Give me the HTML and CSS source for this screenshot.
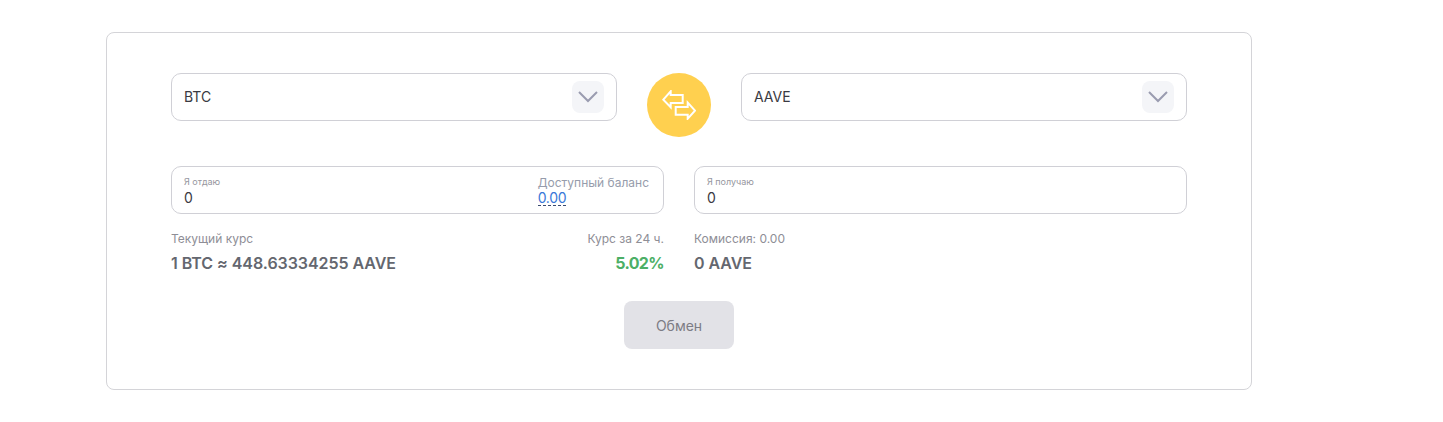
FILE: index.html
```html
<!DOCTYPE html>
<html lang="ru">
<head>
    <meta charset="UTF-8">
    <meta name="viewport" content="width=device-width, initial-scale=1.0">
    <title>Обмен</title>
    <link rel="stylesheet" href="styles.css">
</head>
<body>
    <div class="exchange-card">
        <div class="select-row">
            <div class="select-box">
                <span class="select-text">BTC</span>
                <span class="select-arrow">
                    <svg width="20" height="12" viewBox="0 0 20 12"><path d="M1 1l9 9 9-9" fill="none" stroke="#9a9cb0" stroke-width="2"/></svg>
                </span>
            </div>
            <div class="swap-button">
                <svg width="34" height="30" viewBox="0 0 34 30"><path d="M1.300 9.700L8.700 1.300V5H20.700V13H8.700V17.300Z" fill="none" stroke="#fff" stroke-width="2"/><path d="M13.700 17H25.700V12.700L33 20.700L25.700 28.700V24.700H13.700Z" fill="none" stroke="#fff" stroke-width="2"/></svg>
            </div>
            <div class="select-box">
                <span class="select-text">AAVE</span>
                <span class="select-arrow">
                    <svg width="20" height="12" viewBox="0 0 20 12"><path d="M1 1l9 9 9-9" fill="none" stroke="#9a9cb0" stroke-width="2"/></svg>
                </span>
            </div>
        </div>

        <div class="amount-row">
            <div class="amount-col">
                <div class="amount-box">
                    <div>
                        <div class="amount-label">Я отдаю</div>
                        <div class="amount-value">0</div>
                    </div>
                    <div class="balance">
                        <div class="balance-label">Доступный баланс</div>
                        <span class="balance-value">0.00</span>
                    </div>
                </div>
                <div class="info-row">
                    <div>
                        <div class="info-label">Текущий курс</div>
                        <div class="info-value">1 BTC ≈ 448.63334255 AAVE</div>
                    </div>
                    <div class="info-right">
                        <div class="info-label">Курс за 24 ч.</div>
                        <div class="info-value green">5.02%</div>
                    </div>
                </div>
            </div>
            <div class="amount-col">
                <div class="amount-box">
                    <div>
                        <div class="amount-label">Я получаю</div>
                        <div class="amount-value">0</div>
                    </div>
                </div>
                <div class="info-row">
                    <div>
                        <div class="info-label">Комиссия: 0.00</div>
                        <div class="info-value">0 AAVE</div>
                    </div>
                </div>
            </div>
        </div>

        <div class="submit-row">
            <button type="button" class="submit-button">Обмен</button>
        </div>
    </div>
</body>
</html>
```

FILE: styles.css
```css
body {
    margin: 0;
    background-color: #fff;
    font-family: Inter, "Noto Sans", sans-serif;
    color: #3a3a42;
}

.exchange-card {
    box-sizing: border-box;
    width: 1146px;
    height: 358px;
    margin: 32px 0 0 106px;
    padding: 40px 64px 0;
    border: 1px solid #d4d4d8;
    border-radius: 8px;
}

.select-row {
    display: flex;
    justify-content: space-between;
    height: 64px;
}

.select-box {
    box-sizing: border-box;
    display: flex;
    align-items: center;
    justify-content: space-between;
    width: 446px;
    height: 48px;
    padding: 0 12px;
    border: 1px solid #d0d0d6;
    border-radius: 10px;
    font-size: 14px;
}

.select-text {
    margin-bottom: 2px;
}

.select-arrow {
    display: flex;
    align-items: center;
    justify-content: center;
    width: 32px;
    height: 32px;
    border-radius: 8px;
    background-color: #f4f5f8;
}

.swap-button {
    display: flex;
    align-items: center;
    justify-content: center;
    width: 64px;
    height: 64px;
    border-radius: 50%;
    background-color: #ffd04f;
}

.amount-row {
    display: flex;
    justify-content: space-between;
    margin-top: 29px;
}

.amount-col {
    width: 493px;
}

.amount-box {
    box-sizing: border-box;
    display: flex;
    justify-content: space-between;
    height: 48px;
    padding: 9px 14px 0 12px;
    border: 1px solid #d0d0d6;
    border-radius: 10px;
}

.amount-label {
    font-size: 9px;
    line-height: 11px;
    color: #96969e;
}

.amount-value {
    font-size: 14px;
    line-height: 17px;
    margin-top: 2px;
}

.balance {
    margin-top: -1px;
}

.balance-label {
    font-size: 12px;
    line-height: 15px;
    color: #969cab;
}

.balance-value {
    font-size: 14px;
    line-height: 15px;
    letter-spacing: -0.3px;
    display: inline-block;
    color: #3a78d8;
    border-bottom: 1px dashed #3a4a70;
    vertical-align: top;
}

.info-row {
    display: flex;
    justify-content: space-between;
    margin-top: 18px;
}

.info-right {
    text-align: right;
}

.info-label {
    font-size: 12px;
    line-height: 14px;
    color: #8e8e96;
}

.info-value {
    margin-top: 7px;
    font-size: 16px;
    line-height: 20px;
    font-weight: 600;
    letter-spacing: -0.05px;
    color: #64676f;
}

.green {
    color: #4caf66;
    font-weight: 700;
    letter-spacing: -0.6px;
}

.submit-row {
    display: flex;
    justify-content: center;
    margin-top: 28px;
}

.submit-button {
    width: 110px;
    height: 48px;
    border: none;
    border-radius: 8px;
    background-color: #e2e2e7;
    color: #7c7c84;
    font-family: inherit;
    font-size: 14px;
}
```
